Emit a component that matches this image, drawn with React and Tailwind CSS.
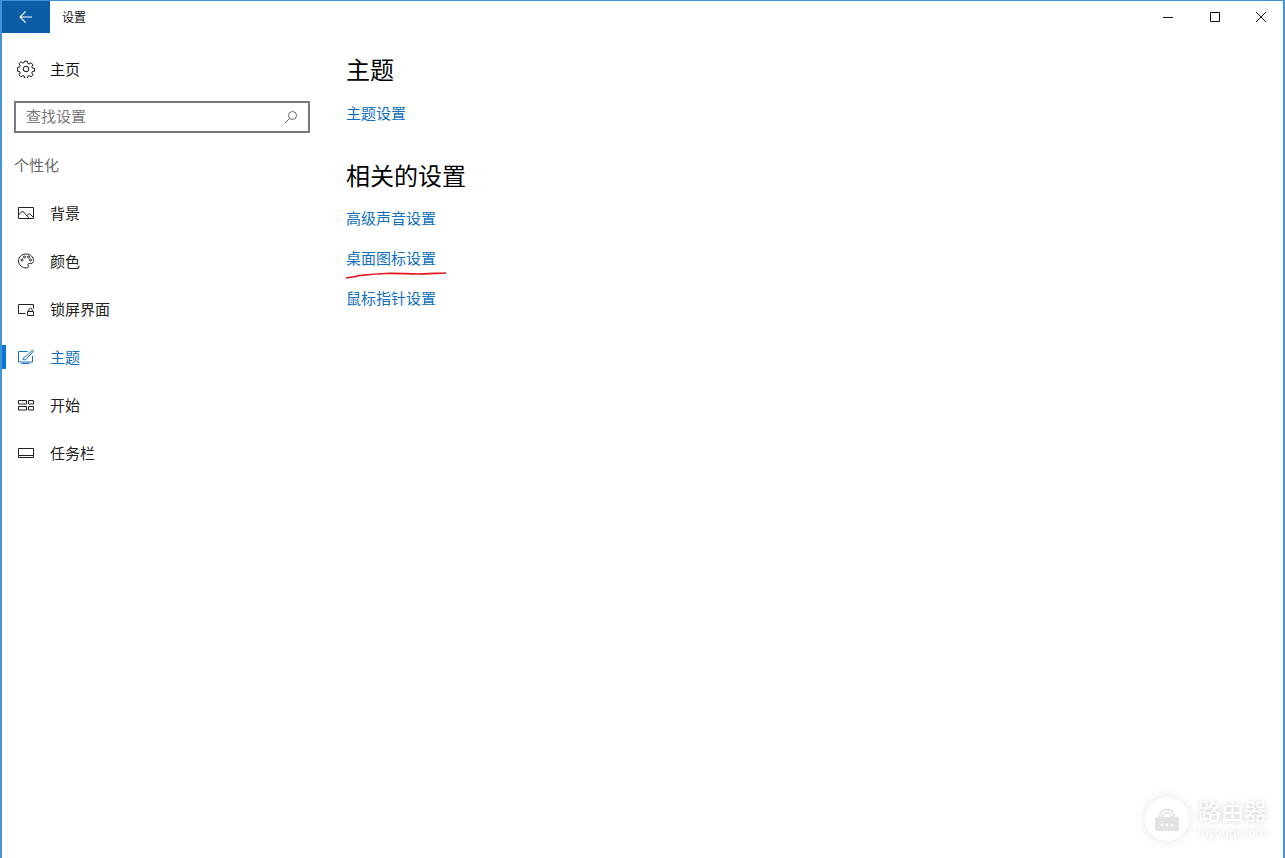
import { useState } from "react";

const cjk = { fontFamily: '"Noto Sans CJK SC", "Noto Sans", sans-serif' };

function Ico({ children, className = "", w = 18, h = 18 }) {
  return (
    <svg width={w} height={h} viewBox="0 0 18 18" fill="none" stroke="currentColor" strokeWidth="1" className={className}>
      {children}
    </svg>
  );
}

const navItems = [
  {
    label: "背景",
    icon: (
      <Ico>
        <path d="M1.500 3.500h15v11h-15z" />
        <path d="M1.500 11l4-4 7 7.500M10 11.500l2.500-2 4 4" />
      </Ico>
    ),
  },
  {
    label: "颜色",
    icon: (
      <Ico>
        <path d="M9 2c4.200 0 7.500 2.900 7.500 6.500 0 1.700-1 3-2.700 3h-1.600c-1 0-1.500.8-1.100 1.700.5 1 .4 2.800-1.300 2.800C5.200 16 1.500 12.900 1.500 8.800 1.500 5 4.800 2 9 2z" />
        <circle cx="5" cy="8" r="1" />
        <circle cx="7.500" cy="5" r="1" />
        <circle cx="11.500" cy="5" r="1" />
        <circle cx="13.500" cy="8" r="1" />
      </Ico>
    ),
  },
  {
    label: "锁屏界面",
    icon: (
      <Ico>
        <path d="M8.500 13.500H1.500v-9h15v4" />
        <path d="M10.500 11.500h6v4h-6zM11.800 11.500V10a1.700 1.700 0 0 1 3.400 0v1.500" />
      </Ico>
    ),
  },
  {
    label: "主题",
    active: true,
    icon: (
      <Ico>
        <path d="M10.500 3.500H1.500v10.500h14V8" />
        <path d="M4.500 15.500h8" />
        <path d="M6 11.500c0-1.700 1-2.500 2.300-2.500L15.500 2l1 1-6.700 7.500c-.3 1-2 1.500-3.800 1z" />
      </Ico>
    ),
  },
  {
    label: "开始",
    icon: (
      <Ico>
        <path d="M1.500 4.500h8v3.500h-8zM11.500 4.500h5v3.500h-5zM1.500 10.500h8v3.500h-8zM11.500 10.500h5v3.500h-5z" />
      </Ico>
    ),
  },
  {
    label: "任务栏",
    icon: (
      <Ico>
        <path d="M1.500 4.500h15v9h-15z" />
        <path d="M1.500 11.500h15" />
      </Ico>
    ),
  },
];

function NavItem({ item }) {
  return (
    <div className={`relative h-12 flex items-center pl-[15px] ${item.active ? "text-[#0f6fc0]" : "text-[#222222]"}`}>
      {item.active && <span className="absolute left-0 top-3 w-1 h-6 bg-[#0a78d7]" />}
      {item.icon}
      <span className="ml-[15px] text-[15px]">{item.label}</span>
    </div>
  );
}

function Watermark() {
  return (
    <div className="absolute left-[1143px] top-[796px] flex items-center">
      <div className="w-[44px] h-[44px] rounded-full bg-white shadow-[0_0_12px_rgba(0,0,0,0.1)] flex items-center justify-center">
        <svg width="30" height="30" viewBox="0 0 30 30" fill="none">
          <rect x="3" y="13" width="24" height="14" rx="2" fill="#e2e2e2" />
          <path d="M10.500 13a4.500 4.500 0 0 1 9 0M7.500 13a7.500 7.500 0 0 1 15 0" stroke="#e2e2e2" strokeWidth="1.600" />
          <circle cx="10" cy="21" r="1.300" fill="#ffffff" />
          <circle cx="15" cy="21" r="1.300" fill="#ffffff" />
          <circle cx="20" cy="21" r="1.300" fill="#ffffff" />
        </svg>
      </div>
      <div className="ml-[9px] flex flex-col items-start gap-[5px] text-white [text-shadow:0_0_5px_rgba(0,0,0,0.22)]">
        <span className="text-[23px] leading-[23px]">路由器</span>
        <span className="text-[12px] leading-[12px]" style={{ fontFamily: '"Open Sans", sans-serif' }}>luyouqi.com</span>
      </div>
    </div>
  );
}

export default function App() {
  const [query, setQuery] = useState("");

  return (
    <div className="relative w-[1285px] h-[858px] overflow-hidden bg-white border-x-2 border-t border-[#3f94d8]" style={cjk}>
      {/* title bar */}
      <div className="h-8 flex items-stretch">
        <button className="w-12 bg-[#0a5ea8] text-white flex items-center justify-center">
          <svg width="14" height="14" viewBox="0 0 14 14" fill="none" stroke="currentColor" strokeWidth="1.100">
            <path d="M1 7h12M6.500 1.500L1 7l5.500 5.500" />
          </svg>
        </button>
        <span className="ml-3 self-center text-xs text-[#111111]">设置</span>
        <div className="ml-auto -mr-px flex items-center text-[#111111]">
          <span className="w-12 flex justify-center">
            <svg width="12" height="12" viewBox="0 0 12 12" stroke="currentColor"><path d="M1 6.500h10" /></svg>
          </span>
          <span className="w-[46px] flex justify-center">
            <svg width="12" height="12" viewBox="0 0 12 12" fill="none" stroke="currentColor"><path d="M1.500 1.500h9v9h-9z" /></svg>
          </span>
          <span className="w-[46px] flex justify-center">
            <svg width="12" height="12" viewBox="0 0 12 12" stroke="currentColor"><path d="M1 1l10 10M11 1L1 11" /></svg>
          </span>
        </div>
      </div>

      <div className="flex">
        {/* sidebar */}
        <aside className="w-[344px] shrink-0">
          <div className="h-[48px] mt-[12px] flex items-center pl-[15px] text-[#111111]">
            <svg width="18" height="18" viewBox="0 0 18 18" fill="none" stroke="currentColor">
              <circle cx="9" cy="9" r="2.800" />
              <path d="M7.600 1.200h2.800l.4 2.200 1.300.6 1.900-1.200 2 2-1.200 1.900.6 1.300 2.200.4v2.800l-2.200.4-.6 1.300 1.200 1.900-2 2-1.900-1.200-1.300.6-.4 2.200H7.600l-.4-2.200-1.300-.6-1.900 1.200-2-2 1.200-1.900-.6-1.300-2.200-.4V7.400l2.200-.4.6-1.300L2 3.800l2-2 1.900 1.200 1.300-.6z" />
            </svg>
            <span className="ml-[15px] text-[15px]">主页</span>
          </div>

          <div className="ml-3 mt-2 w-[296px] h-8 border-2 border-[#7a7a7a] flex items-center px-[10px]">
            <input
              value={query}
              onChange={(e) => setQuery(e.target.value)}
              placeholder="查找设置"
              className="flex-1 min-w-0 pb-[2px] text-[15px] outline-none placeholder:text-[#7a7a7a]"
            />
            <svg width="14" height="14" viewBox="0 0 14 14" fill="none" stroke="#666666">
              <circle cx="8.500" cy="5.500" r="4" />
              <path d="M5.500 8.500L1 13" />
            </svg>
          </div>

          <div className="ml-3 mt-[21px] h-[22px] leading-[22px] text-[15px] text-[#666666]">个性化</div>

          <nav className="mt-[13px]">
            {navItems.map((item) => (
              <NavItem key={item.label} item={item} />
            ))}
          </nav>
        </aside>

        {/* content */}
        <main className="flex-1">
          <h2 className="mt-[18px] text-2xl leading-9 text-black">主题</h2>
          <a className="block mt-[15px] text-[15px] leading-[22px] text-[#0f6fc0]">主题设置</a>
          <h2 className="mt-[33px] text-2xl leading-9 text-black">相关的设置</h2>
          <div className="mt-[14px] flex flex-col gap-[18px] items-start">
            <a className="text-[15px] leading-[22px] text-[#0f6fc0]">高级声音设置</a>
            <a className="relative text-[15px] leading-[22px] text-[#0f6fc0]">
              桌面图标设置
              <svg className="absolute left-0 top-[20px] overflow-visible" width="100" height="12" viewBox="0 0 100 12" fill="none">
                <path d="M0 11c3-.8 7-1 10-1.500 1-.8 2-1 5-1.200 8-.8 16-1.500 25-1.800 11-.3 21 .5 32 .5 9 0 18-.7 28-1" stroke="#e1141f" strokeWidth="1.700" />
              </svg>
            </a>
            <a className="text-[15px] leading-[22px] text-[#0f6fc0]">鼠标指针设置</a>
          </div>
        </main>
      </div>

      <Watermark />
    </div>
  );
}
